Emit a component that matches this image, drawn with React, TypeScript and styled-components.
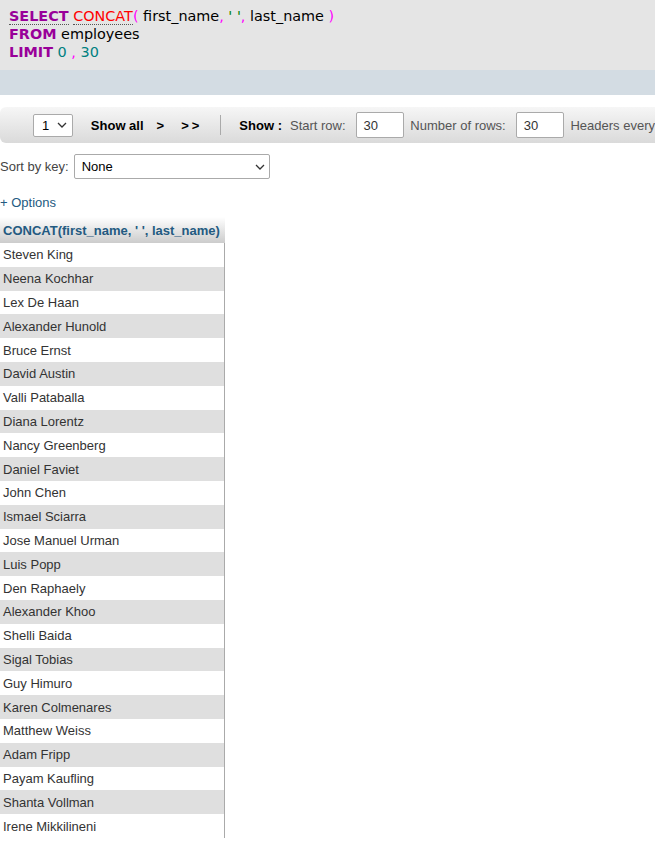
import React from "react";
import styled, { createGlobalStyle } from "styled-components";

const Global = createGlobalStyle`
  html, body { margin: 0; padding: 0; background: #fff; }
  body { font-family: "Liberation Sans", Arial, sans-serif; font-size: 13px; color: #333; overflow: hidden; }
`;

const Page = styled.div`
  width: 655px;
  display: flex;
  flex-direction: column;
`;

const SqlBox = styled.div`
  background: #e5e5e5;
  height: 70px;
  box-sizing: border-box;
  padding: 7px 9px 0;
  font-family: "DejaVu Sans", Tahoma, sans-serif;
  font-size: 14.4px;
  line-height: 18px;
  color: #000;
  white-space: pre;
`;

const SqlFooter = styled.div`
  background: #d3dce3;
  height: 25px;
`;

const Kw = styled.span<{ $u?: boolean }>`
  color: #990099;
  font-weight: bold;
  ${(p) => (p.$u ? "border-bottom: 1px dotted #555;" : "")}
`;
const Fn = styled.span`
  color: #ff0000;
  border-bottom: 1px dotted #555;
`;
const Punc = styled.span`
  color: #ff00ff;
`;
const Str = styled.span`
  color: #008000;
`;
const Num = styled.span`
  color: #008080;
`;

const Toolbar = styled.div`
  margin-top: 12px;
  height: 36px;
  border-radius: 6px 0 0 6px;
  background: linear-gradient(#f6f6f6, #dadada);
  display: flex;
  align-items: center;
  padding-left: 33px;
  white-space: nowrap;
  overflow: hidden;
  color: #333;
`;

const PageSelect = styled.div`
  width: 40px;
  height: 23px;
  box-sizing: border-box;
  background: #fff;
  border: 1px solid #aaa;
  border-radius: 2px;
  display: flex;
  align-items: center;
  padding: 0 5px 0 8px;
  justify-content: space-between;
  font-size: 13px;
  color: #000;
`;

const Bold = styled.span<{ $ml?: number; $ls?: number }>`
  font-weight: bold;
  color: #000;
  margin-left: ${(p) => p.$ml ?? 0}px;
  letter-spacing: ${(p) => p.$ls ?? 0}px;
  font-size: 13px;
`;

const Divider = styled.div`
  width: 1px;
  height: 20px;
  background: #aaa;
  margin-left: 18px;
`;

const Label = styled.span<{ $ml?: number }>`
  margin-left: ${(p) => p.$ml ?? 0}px;
  color: #555;
`;

const NumInput = styled.div<{ $ml?: number }>`
  margin-left: ${(p) => p.$ml ?? 0}px;
  width: 49px;
  height: 26px;
  box-sizing: border-box;
  border: 1px solid #aaa;
  border-radius: 2px;
  background: #fff;
  padding-left: 7px;
  display: flex;
  align-items: center;
  color: #333;
`;

const SortRow = styled.div`
  margin-top: 11px;
  display: flex;
  align-items: center;
  color: #444;
`;

const SortSelect = styled.div`
  margin-left: 5px;
  width: 196px;
  height: 25px;
  box-sizing: border-box;
  border: 1px solid #aaa;
  border-radius: 2px;
  background: #fff;
  display: flex;
  align-items: center;
  justify-content: space-between;
  padding: 0 4px 0 7px;
  color: #000;
`;

const Options = styled.div`
  margin-top: 16px;
  color: #235a81;
  line-height: 16px;
`;

const Table = styled.div`
  margin-top: 6px;
  width: 225px;
  display: flex;
  flex-direction: column;
`;

const Header = styled.div`
  height: 26px;
  box-sizing: border-box;
  padding: 0 3px;
  background: linear-gradient(#ffffff, #cccccc);
  color: #235a81;
  font-weight: bold;
  display: flex;
  align-items: center;
  white-space: nowrap;
`;

const Row = styled.div<{ $odd: boolean }>`
  height: 23.8px;
  box-sizing: border-box;
  padding-left: 3px;
  display: flex;
  align-items: center;
  background: ${(p) => (p.$odd ? "#dfdfdf" : "#fff")};
  border-right: 1px solid #aaa;
  color: #333;
`;

const Chevron = () => (
  <svg width="10" height="6" viewBox="0 0 10 6">
    <path d="M1 1l4 4 4-4" fill="none" stroke="#333" strokeWidth="1.3" />
  </svg>
);

const names = [
  "Steven King", "Neena Kochhar", "Lex De Haan", "Alexander Hunold", "Bruce Ernst",
  "David Austin", "Valli Pataballa", "Diana Lorentz", "Nancy Greenberg", "Daniel Faviet",
  "John Chen", "Ismael Sciarra", "Jose Manuel Urman", "Luis Popp", "Den Raphaely",
  "Alexander Khoo", "Shelli Baida", "Sigal Tobias", "Guy Himuro", "Karen Colmenares",
  "Matthew Weiss", "Adam Fripp", "Payam Kaufling", "Shanta Vollman", "Irene Mikkilineni",
];

export default function App() {
  return (
    <Page>
      <Global />
      <SqlBox>
        <Kw $u>SELECT</Kw> <Fn>CONCAT</Fn><Punc>(</Punc> first_name<Punc>,</Punc> <Str>' '</Str><Punc>,</Punc> last_name <Punc>)</Punc>{"\n"}
        <Kw>FROM</Kw> employees{"\n"}
        <Kw>LIMIT</Kw> <Num>0</Num> <Punc>,</Punc> <Num>30</Num>
      </SqlBox>
      <SqlFooter />
      <Toolbar>
        <PageSelect>1 <Chevron /></PageSelect>
        <Bold $ml={18}>Show all</Bold>
        <Bold $ml={13}>&gt;</Bold>
        <Bold $ml={17} $ls={3}>&gt;&gt;</Bold>
        <Divider />
        <Bold $ml={18}>Show :</Bold>
        <Label $ml={8}>Start row:</Label>
        <NumInput $ml={10}>30</NumInput>
        <Label $ml={6}>Number of rows:</Label>
        <NumInput $ml={10}>30</NumInput>
        <Label $ml={6}>Headers every</Label>
      </Toolbar>
      <SortRow>
        Sort by key:
        <SortSelect>None <Chevron /></SortSelect>
      </SortRow>
      <Options>+ Options</Options>
      <Table>
        <Header>CONCAT(first_name, ' ', last_name)</Header>
        {names.map((n, i) => (
          <Row key={n} $odd={i % 2 === 1}>{n}</Row>
        ))}
      </Table>
    </Page>
  );
}
